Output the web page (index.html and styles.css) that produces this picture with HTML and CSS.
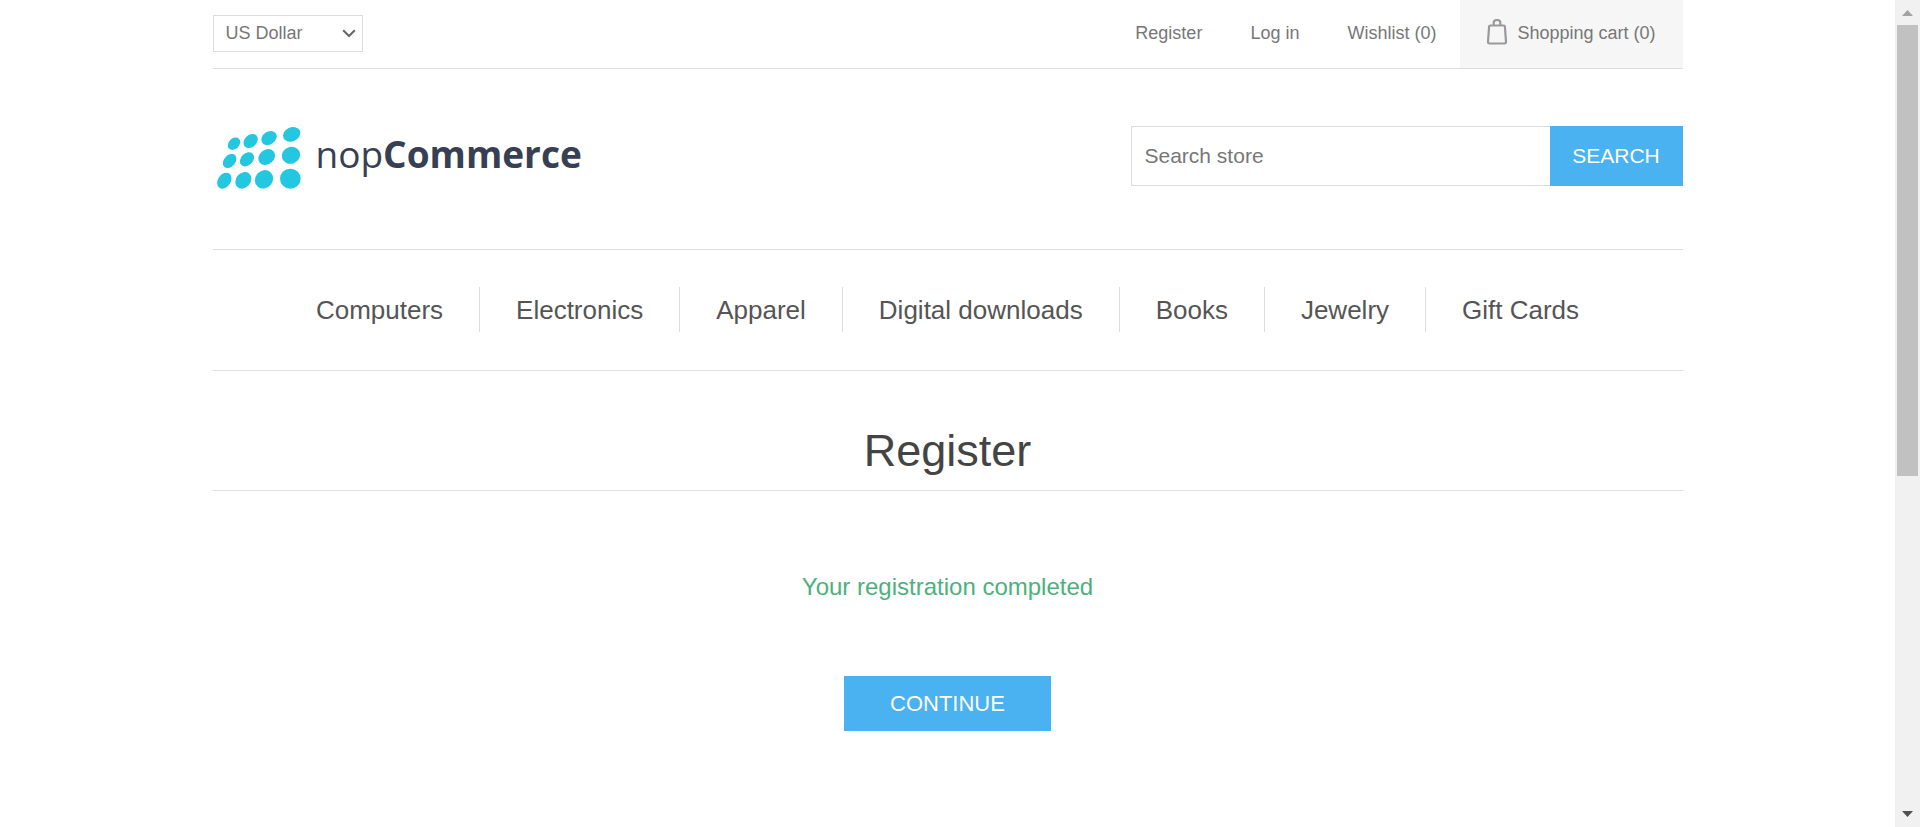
FILE: index.html
```html
<!DOCTYPE html>
<html lang="en">
<head>
<meta charset="utf-8">
<title>nopCommerce. Register</title>
<link rel="stylesheet" href="styles.css">
</head>
<body>
<div class="viewport">
  <div class="page">
    <header>
      <div class="header-upper">
        <div class="currency">
          <select class="currency-select" aria-label="Currency selector">
            <option>US Dollar</option>
            <option>Euro</option>
          </select>
          <svg class="chevron" viewBox="0 0 14 9" aria-hidden="true"><path d="M1.200 1.200 7 7l5.800-5.800" fill="none" stroke="#666" stroke-width="2"/></svg>
        </div>
        <nav class="header-links" aria-label="Account">
          <a href="#register">Register</a>
          <a href="#login">Log in</a>
          <a href="#wishlist">Wishlist (0)</a>
          <a class="cart" href="#cart">
            <svg class="bag" viewBox="0 0 20 28" aria-hidden="true"><g fill="none" stroke="#999" stroke-width="2.200" stroke-linejoin="round"><path d="M3.200 6.500h13.600q1 0 1.100 1L19 22.800q.1 1.700-1.500 1.700H2.500Q.9 24.500 1 22.800L2.100 7.500q.1-1 1.100-1Z"/><path d="M6.700 6V3.600Q6.700 1 10 1t3.300 2.600V6"/></g></svg>
            Shopping cart (0)
          </a>
        </nav>
      </div>
      <div class="header-lower">
        <a class="logo" href="#home" aria-label="nopCommerce">
          <svg class="logo-mark" viewBox="39 369 270 204" aria-hidden="true">
            <g fill="#24c7e0">
              <ellipse cx="102" cy="431" rx="21" ry="16" transform="rotate(-45 102 431)"/>
              <ellipse cx="152" cy="423" rx="24" ry="18" transform="rotate(-43 152 423)"/>
              <ellipse cx="207" cy="414" rx="25" ry="19" transform="rotate(-35 207 414)"/>
              <ellipse cx="275" cy="403" rx="27" ry="21" transform="rotate(-25 275 403)"/>
              <ellipse cx="89" cy="483" rx="24" ry="17" transform="rotate(-48 89 483)"/>
              <ellipse cx="141" cy="478" rx="24" ry="18" transform="rotate(-45 141 478)"/>
              <ellipse cx="200" cy="471" rx="27" ry="22" transform="rotate(-40 200 471)"/>
              <ellipse cx="273" cy="466" rx="28" ry="25" transform="rotate(-20 273 466)"/>
              <ellipse cx="73" cy="542" rx="26" ry="19" transform="rotate(-55 73 542)"/>
              <ellipse cx="130" cy="541" rx="27" ry="22" transform="rotate(-50 130 541)"/>
              <ellipse cx="192" cy="538" rx="29" ry="26" transform="rotate(-50 192 538)"/>
              <ellipse cx="271" cy="536" rx="31" ry="30"/>
            </g>
          </svg>
          <span class="logo-text">nop<b>Commerce</b></span>
        </a>
        <form class="search">
          <input class="search-box" type="text" placeholder="Search store" aria-label="Search store">
          <button class="search-button" type="button">SEARCH</button>
        </form>
      </div>
    </header>
    <nav class="menu" aria-label="Categories">
      <a href="#computers">Computers</a>
      <a href="#electronics">Electronics</a>
      <a href="#apparel">Apparel</a>
      <a href="#digital">Digital downloads</a>
      <a href="#books">Books</a>
      <a href="#jewelry">Jewelry</a>
      <a href="#gifts">Gift Cards</a>
    </nav>
    <main class="content">
      <h1 class="title">Register</h1>
      <p class="result">Your registration completed</p>
      <button class="continue" type="button">CONTINUE</button>
    </main>
  </div>
  <div class="scrollbar" aria-hidden="true">
    <svg class="arrow" viewBox="0 0 25 25"><path d="M7 16h11l-5.500-6z" fill="#a3a3a3"/></svg>
    <div class="track"><div class="thumb"></div></div>
    <svg class="arrow" viewBox="0 0 25 25"><path d="M7 9h11l-5.500 6z" fill="#505050"/></svg>
  </div>
</div>
</body>
</html>
```
FILE: styles.css
```css
* {
  box-sizing: border-box;
}

body {
  margin: 0;
  background: #fff;
  color: #777;
  font: 18px "Liberation Sans", Arial, sans-serif;
}

a {
  color: inherit;
  text-decoration: none;
}

input,
select,
button {
  border: 0;
  border-radius: 0;
  font-family: inherit;
}

.viewport {
  display: grid;
  grid-template-columns: minmax(0, 1fr) 25px;
}

.page {
  width: 100%;
  max-width: 1470px;
  margin: 0 auto;
}

.header-upper {
  display: flex;
  justify-content: space-between;
  align-items: center;
  min-height: 69px;
  border-bottom: 1px solid #ddd;
}

.currency {
  display: grid;
  align-items: center;
  width: 150px;
  padding-bottom: 2px;
}

.currency-select {
  grid-area: 1 / 1;
  height: 37px;
  padding: 0 12px;
  border: 1px solid #ddd;
  background: #fff;
  color: #777;
  font-size: 18px;
  appearance: none;
}

.chevron {
  grid-area: 1 / 1;
  justify-self: end;
  width: 14px;
  margin-right: 7px;
  pointer-events: none;
}

.header-links {
  display: flex;
  align-self: stretch;
}

.header-links a {
  display: flex;
  align-items: center;
  padding: 0 24px 2px;
}

.header-links .cart {
  gap: 10px;
  padding: 0 27px 2px;
  background: #f6f6f6;
}

.bag {
  width: 20px;
  height: 28px;
}

.header-lower {
  display: flex;
  justify-content: space-between;
  align-items: center;
  padding: 57px 0 63px;
}

.logo {
  display: flex;
  align-items: center;
  gap: 13px;
  height: 60px;
  color: #364052;
}

.logo-mark {
  width: 90px;
  height: 68px;
  margin-top: 2px;
}

.logo-text {
  padding-bottom: 4px;
  font-family: "Open Sans", "Noto Sans", sans-serif;
  font-size: 37px;
  line-height: 60px;
}

.search {
  display: flex;
  width: 552px;
  height: 60px;
}

.search-box {
  flex: 1;
  min-width: 0;
  padding: 0 13px;
  border: 1px solid #ddd;
  border-right: 0;
  font-size: 21px;
}

.search-box::placeholder {
  color: #777;
}

.search-button {
  min-width: 133px;
  padding: 0 22px;
  background: #4ab2f1;
  color: #fff;
  font-size: 21px;
}

.menu {
  display: flex;
  justify-content: center;
  padding: 37px 0 38px;
  border-top: 1px solid #ddd;
  border-bottom: 1px solid #ddd;
  color: #555;
  font-size: 26px;
  line-height: 43px;
}

.menu a {
  padding: 2px 36px 0;
}

.menu a + a {
  border-left: 1px solid #ddd;
}

.content {
  padding: 53px 0;
  text-align: center;
}

.title {
  margin: 0;
  padding-bottom: 12px;
  border-bottom: 1px solid #ddd;
  color: #444;
  font-size: 45px;
  font-weight: 400;
  line-height: 54px;
}

.result {
  margin: 82px 0 75px;
  color: #4cb17c;
  font-size: 24px;
  line-height: 28px;
}

.continue {
  height: 55px;
  padding: 0 46px;
  background: #4ab2f1;
  color: #fff;
  font-size: 22px;
}

.scrollbar {
  position: sticky;
  top: 0;
  display: flex;
  flex-direction: column;
  height: 100vh;
  background: #f1f1f1;
}

.arrow {
  width: 25px;
  height: 25px;
}

.track {
  flex: 1;
  padding: 0 2px;
}

.thumb {
  height: 58%;
  background: #c1c1c1;
}
```
